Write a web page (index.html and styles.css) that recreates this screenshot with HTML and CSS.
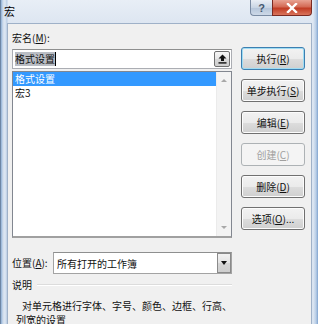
FILE: index.html
```html
<!DOCTYPE html>
<html lang="zh-CN">

<head>
    <meta charset="UTF-8">
    <title>宏</title>
    <link rel="stylesheet" href="styles.css">
</head>

<body>
    <div class="window">
        <div class="titlebar">
            <span class="title">宏</span>
            <div class="caption-btns">
                <div class="cbtn help">?</div>
                <div class="cbtn close">
                    <svg width="12" height="10" viewBox="0 0 12 10">
                        <path d="M2 1 L10 9 M10 1 L2 9" stroke="#fff" stroke-width="2.4" stroke-linecap="square" />
                    </svg>
                </div>
            </div>
        </div>

        <div class="client">
            <div class="main">
                <div class="label">宏名(<u>M</u>):</div>
                <div class="textbox">
                    <span class="sel-text">格式设置</span><span class="caret"></span>
                    <div class="mini-btn">
                        <svg width="9" height="10" viewBox="0 0 9 10">
                            <path d="M4.5 0.5 L8.5 4.5 L6 4.5 L6 7 L3 7 L3 4.5 L0.5 4.5 Z" fill="#111" />
                            <rect x="0.5" y="8.2" width="8" height="1.4" fill="#111" />
                        </svg>
                    </div>
                </div>
                <div class="listbox">
                    <div class="items">
                        <div class="item selected">格式设置</div>
                        <div class="item">宏3</div>
                    </div>
                    <div class="scrollbar">
                        <span class="arrow up"></span>
                        <span class="arrow down"></span>
                    </div>
                </div>

                <div class="location">
                    <span class="label">位置(<u>A</u>):</span>
                    <div class="combo">
                        <span>所有打开的工作簿</span>
                        <div class="combo-btn"><span class="arrow down dark"></span></div>
                    </div>
                </div>

                <div class="group-title"><span>说明</span></div>
                <div class="desc">对单元格进行字体、字号、颜色、边框、行高、<br>列宽的设置</div>
            </div>

            <div class="actions">
                <button class="btn default">执行(<u>R</u>)</button>
                <button class="btn">单步执行(<u>S</u>)</button>
                <button class="btn">编辑(<u>E</u>)</button>
                <button class="btn" disabled>创建(<u>C</u>)</button>
                <button class="btn">删除(<u>D</u>)</button>
                <button class="btn">选项(<u>O</u>)...</button>
            </div>
        </div>
    </div>
</body>

</html>
```

FILE: styles.css
```css
body {
    margin: 0;
    width: 318px;
    height: 324px;
    overflow: hidden;
    font-family: "Noto Sans CJK SC", "Liberation Sans", sans-serif;
    font-size: 10px;
    color: #111;
}

u {
    text-decoration: underline;
    text-underline-offset: 1px;
}

.window {
    height: 324px;
    box-sizing: border-box;
    padding: 0 6px 0 6px;
    display: flex;
    flex-direction: column;
    background: linear-gradient(to right, #8fb0d6 0, #cfdcec 2px, #dfe8f3 4px, #b9cce4 6px, transparent 7px),
        linear-gradient(to left, #7fa3cf 0, #b8cde6 2px, #dfe8f3 5px, transparent 7px),
        linear-gradient(to bottom, #e8eef6, #d5e0ee 40px, #c6d6ea);
    border-left: 1px solid #6d86a5;
}

.titlebar {
    height: 23px;
    margin: 0 -6px 0 -7px;
    display: flex;
    align-items: flex-start;
    flex-shrink: 0;
}

.title {
    padding: 4px 0 0 4px;
    font-size: 11px;
    line-height: 15px;
    color: #000;
}

.caption-btns {
    margin-left: auto;
    margin-right: 6px;
    display: flex;
}

.cbtn {
    height: 16px;
    display: flex;
    align-items: center;
    justify-content: center;
    border: 1px solid #7a8ba3;
    border-top: none;
    box-sizing: border-box;
}

.help {
    width: 22px;
    border-radius: 0 0 0 4px;
    border-right: none;
    background: linear-gradient(to bottom, #e9eef5, #c9d5e4 50%, #b4c4d9 51%, #cdd9e8);
    color: #45576f;
    font-family: "Liberation Sans", sans-serif;
    font-weight: bold;
    font-size: 11px;
}

.close {
    width: 40px;
    border-radius: 0 0 4px 0;
    border-color: #7a2a22;
    background: linear-gradient(to bottom, #e8a393, #d46a55 45%, #c13c24 55%, #d9745c);
}

.client {
    flex: 1;
    background: #f0f0f0;
    border: 1px solid #9fb1c8;
    border-bottom: none;
    padding: 6px 0 0 4px;
    display: grid;
    grid-template-columns: 220px 64px;
    column-gap: 9px;
    align-items: start;
}

.main {
    display: flex;
    flex-direction: column;
}

.label {
    line-height: 16px;
    height: 16px;
    white-space: nowrap;
}

.textbox {
    margin-top: 3px;
    height: 20px;
    box-sizing: border-box;
    border: 1px solid #abadb3;
    border-top-color: #8e8f8f;
    background: #fff;
    display: flex;
    align-items: center;
    padding-left: 2px;
    position: relative;
}

.sel-text {
    background: #b9bdc4;
    line-height: 14px;
}

.caret {
    width: 1px;
    height: 14px;
    background: #000;
}

.mini-btn {
    margin-left: auto;
    margin-right: 1px;
    width: 16px;
    height: 16px;
    box-sizing: border-box;
    border: 1px solid #707070;
    border-radius: 2px;
    background: linear-gradient(to bottom, #f6f6f6, #e6e6e6 50%, #d8d8d8 51%, #cfcfcf);
    display: flex;
    align-items: center;
    justify-content: center;
}

.listbox {
    margin-top: 2px;
    height: 167px;
    box-sizing: border-box;
    border: 1px solid #828790;
    border-bottom: 2px solid #a0a0a0;
    background: #fff;
    display: flex;
}

.items {
    flex: 1;
}

.item {
    height: 14px;
    line-height: 14px;
    padding-left: 2px;
}

.item.selected {
    background: #3399ff;
    color: #fff;
}

.scrollbar {
    width: 14px;
    background: #f3f3f3;
    border-left: 1px solid #ebebeb;
    display: flex;
    flex-direction: column;
    justify-content: space-between;
    align-items: center;
    padding: 7px 0 7px;
}

.arrow {
    width: 0;
    height: 0;
    border-left: 3px solid transparent;
    border-right: 3px solid transparent;
}

.arrow.up {
    border-bottom: 3px solid #a8a8a8;
}

.arrow.down {
    border-top: 3px solid #a8a8a8;
}

.arrow.down.dark {
    border-left-width: 3.5px;
    border-right-width: 3.5px;
    border-top: 4px solid #111;
}

.location {
    margin-top: 14px;
    display: flex;
    align-items: center;
}

.location .label {
    width: 41px;
}

.combo {
    flex: 1;
    height: 22px;
    box-sizing: border-box;
    border: 1px solid #a3a3a3;
    border-top-color: #8e8f8f;
    background: #fff;
    display: flex;
    align-items: center;
    padding-left: 3px;
}

.combo-btn {
    margin-left: auto;
    width: 14px;
    height: 20px;
    box-sizing: border-box;
    border: 1px solid #8a8a8a;
    background: linear-gradient(to bottom, #f2f2f2, #e4e4e4 50%, #d6d6d6 51%, #cdcdcd);
    display: flex;
    align-items: center;
    justify-content: center;
}

.group-title {
    margin-top: 3px;
    display: flex;
    align-items: center;
    line-height: 16px;
}

.group-title::after {
    content: "";
    flex: 1;
    margin-left: 5px;
    border-top: 1px solid #dcdcdc;
    border-bottom: 1px solid #fff;
}

.desc {
    margin-top: 6px;
    padding-left: 4px;
    text-indent: 6px;
    line-height: 14px;
    white-space: nowrap;
}

.actions {
    padding-top: 17px;
    display: flex;
    flex-direction: column;
    gap: 9px;
}

.btn {
    height: 23px;
    margin: 0;
    padding: 0;
    font: inherit;
    color: #111;
    border: 1px solid #707070;
    border-radius: 3px;
    background: linear-gradient(to bottom, #f2f2f2, #ebebeb 50%, #dddddd 51%, #cfcfcf);
    box-shadow: inset 0 0 0 1px #fcfcfc;
    white-space: nowrap;
}

.btn.default {
    border-color: #3c7fb1;
    box-shadow: inset 0 0 0 1px #9fdcf3;
}

.btn:disabled {
    color: #a0a0a0;
    border-color: #adb2b5;
    background: #f4f4f4;
    box-shadow: none;
}
```
